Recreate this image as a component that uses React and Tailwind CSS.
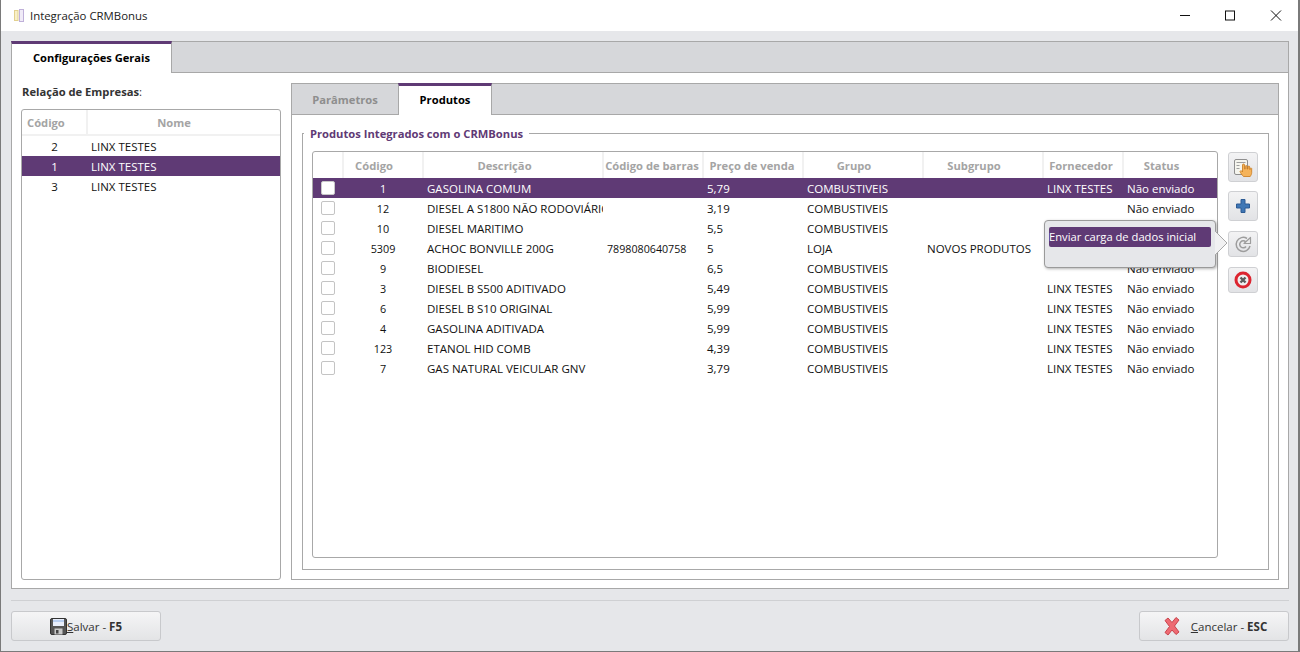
const F = { fontFamily: '"Open Sans","Noto Sans",sans-serif' };

const cols = [
  ["w-[31px]", "", ""],
  ["w-[80px]", "Código", "pr-[18px]"],
  ["w-[180px]", "Descrição", "pr-[17px]"],
  ["w-[100px]", "Código de barras", "pr-[2px]"],
  ["w-[100px]", "Preço de venda", "pr-[2px]"],
  ["w-[120px]", "Grupo", "pr-[18px]"],
  ["w-[120px]", "Subgrupo", "pr-[18px]"],
  ["w-[80px]", "Fornecedor", "pr-[4px]"],
  ["flex-1", "Status", "pr-[18px]"],
];

const rows = [
  ["1", "GASOLINA COMUM", "", "5,79", "COMBUSTIVEIS", "", "LINX TESTES", "Não enviado"],
  ["12", "DIESEL A S1800 NÃO RODOVIÁRIO", "", "3,19", "COMBUSTIVEIS", "", "", "Não enviado"],
  ["10", "DIESEL MARITIMO", "", "5,5", "COMBUSTIVEIS", "", "", ""],
  ["5309", "ACHOC BONVILLE 200G", "7898080640758", "5", "LOJA", "NOVOS PRODUTOS", "", ""],
  ["9", "BIODIESEL", "", "6,5", "COMBUSTIVEIS", "", "", "Não enviado"],
  ["3", "DIESEL B S500 ADITIVADO", "", "5,49", "COMBUSTIVEIS", "", "LINX TESTES", "Não enviado"],
  ["6", "DIESEL B S10 ORIGINAL", "", "5,99", "COMBUSTIVEIS", "", "LINX TESTES", "Não enviado"],
  ["4", "GASOLINA ADITIVADA", "", "5,99", "COMBUSTIVEIS", "", "LINX TESTES", "Não enviado"],
  ["123", "ETANOL HID COMB", "", "4,39", "COMBUSTIVEIS", "", "LINX TESTES", "Não enviado"],
  ["7", "GAS NATURAL VEICULAR GNV", "", "3,79", "COMBUSTIVEIS", "", "LINX TESTES", "Não enviado"],
];

function HeaderCell({ w, label, pad }) {
  return (
    <div className={`${w} ${pad} h-full shrink-0 border-r-2 border-[#f1f1f1] last:border-r-0 flex items-center justify-center pt-[2px] whitespace-nowrap overflow-hidden`}>
      {label}
    </div>
  );
}

function SideButton({ h, mt, children }) {
  return (
    <div className={`${h} ${mt} w-[30px] rounded-[3px] border border-[#cfd0d3] bg-gradient-to-b from-[#f3f3f4] to-[#e2e3e6] flex items-center justify-center`}>
      {children}
    </div>
  );
}

export default function App() {
  return (
    <div style={F} className="w-[1300px] h-[652px] overflow-hidden bg-[#e6e7ea] text-[11.5px] text-[#111] border-l border-r-2 border-b border-[#7a7a7a] flex flex-col">
      {/* title bar */}
      <div className="h-[31px] shrink-0 bg-white flex items-center">
        <svg width="14" height="16" viewBox="0 0 14 16" className="ml-[11px]">
          <rect x="2.500" y="2.500" width="3.500" height="10" fill="#f8efc8" stroke="#e2d08e" />
          <rect x="7.500" y="1.500" width="4" height="12" fill="#f0ebf7" stroke="#bfb0d9" />
        </svg>
        <span className="ml-[4px] pt-px text-[#222] text-[11.4px]">Integração CRMBonus</span>
        <div className="ml-auto flex items-center">
          <svg width="12" height="12" viewBox="0 0 12 12" className="mr-[33px]"><path d="M1 5.500h10" stroke="#111" strokeWidth="1" /></svg>
          <svg width="12" height="12" viewBox="0 0 12 12" className="mr-[34px]"><rect x="1.500" y="1" width="9" height="9" fill="none" stroke="#111" /></svg>
          <svg width="12" height="12" viewBox="0 0 12 12" className="mr-[16px]"><path d="M1 .5l10 10M11 .5l-10 10" stroke="#111" strokeWidth="1" /></svg>
        </div>
      </div>

      {/* main */}
      <div className="flex-1 flex flex-col pt-[10px] pl-[10px] pr-[9px]">
        {/* outer tabs */}
        <div className="h-[32px] shrink-0 flex bg-[#d6d7da] border-t border-r border-[#a8a8a8]">
          <div className="w-[161px] h-[32px] -mt-px bg-white border-t-[3px] border-[#5f3a75] border-r border-l border-l-[#a8a8a8] border-r-[#a8a8a8] flex items-center justify-center font-bold text-black text-[11.1px]">
            Configurações Gerais
          </div>
          <div className="flex-1 border-b border-[#a8a8a8]" />
        </div>

        {/* outer panel */}
        <div className="h-[516px] shrink-0 bg-white border border-t-0 border-[#a8a8a8] flex pl-[9px] pr-[9px]">
          {/* left */}
          <div className="w-[260px] shrink-0 flex flex-col">
            <div className="h-[36px] shrink-0 flex items-center pl-px pt-[2px] text-[#333]">
              <span className="font-bold text-[11.2px]">Relação de Empresas</span>:
            </div>
            <div className="h-[471px] shrink-0 border border-[#a8a8a8] rounded-[3px]">
              <div className="h-[26px] flex items-center border-b-2 border-[#f1f1f1] font-bold text-[#a4a4a4] text-[11.2px]">
                <div className="w-[66px] h-full border-r-2 border-[#f1f1f1] flex items-center pl-[5px] pt-[2px]">Código</div>
                <div className="flex-1 text-center pr-[20px] pt-[2px]">Nome</div>
              </div>
              {[["2", false], ["1", true], ["3", false]].map(([c, sel]) => (
                <div key={c} className={`h-[20px] flex items-center pt-[2px] ${sel ? "bg-[#5f3a75] text-white" : ""}`}>
                  <div className="w-[65px] text-center">{c}</div>
                  <div className="pl-[4px]">LINX TESTES</div>
                </div>
              ))}
            </div>
          </div>

          {/* right */}
          <div className="ml-[10px] w-[988px] shrink-0 mt-[10px] h-[497px] flex flex-col border border-[#a8a8a8] bg-white">
            <div className="h-[31px] shrink-0 flex bg-[#d6d7da]">
              <div className="w-[106px] h-full border-b border-[#a8a8a8] flex items-center justify-center pt-[2px] font-bold text-[#8e8e8e] text-[11.2px]">Parâmetros</div>
              <div className="w-[94px] h-[32px] -mt-px bg-white border-t-[3px] border-[#5f3a75] border-r border-r-[#a8a8a8] border-l border-l-[#a8a8a8] flex items-center justify-center font-bold text-black text-[11.2px]">Produtos</div>
              <div className="flex-1 border-b border-[#a8a8a8]" />
            </div>

            {/* fieldset */}
            <fieldset className="ml-[10px] mr-[9px] mt-[10px] h-[445px] border border-[#a8a8a8] pl-[9px] pr-[10px] pb-[11px] min-w-0">
              <legend className="-ml-[8px] px-[6px] font-bold text-[#5f3a75] text-[11.2px] leading-[17px]">Produtos Integrados com o CRMBonus</legend>
              <div className="flex h-[407px] mt-[9px] relative">
                {/* table */}
                <div className="w-[906px] shrink-0 h-full border border-[#a8a8a8] rounded-[3px] overflow-hidden">
                  <div className="h-[26px] flex font-bold text-[#a4a4a4] text-[11.2px]">
                    {cols.map(([w, label, pad], i) => (
                      <HeaderCell key={i} w={w} label={label} pad={pad} />
                    ))}
                  </div>
                  {rows.map((r, i) => {
                    const sel = i === 0;
                    return (
                      <div key={i} className={`h-[20px] flex items-center ${sel ? "bg-[#5f3a75] text-white" : ""}`}>
                        <div className="w-[30px] shrink-0 flex justify-center pr-[1px]">
                          <div className={`w-[14px] h-[14px] rounded-[2px] border ${sel ? "bg-white border-[#c8c8c8]" : "bg-white border-[#c4c4c4]"}`} />
                        </div>
                        <div className="w-[80px] shrink-0 text-center text-[10.8px] pt-[2px]">{r[0]}</div>
                        <div className="w-[180px] shrink-0 pl-[4px] whitespace-nowrap overflow-hidden pt-[2px]">{r[1]}</div>
                        <div className="w-[100px] shrink-0 pl-[4px] text-[10.7px] pt-[2px]">{r[2]}</div>
                        <div className="w-[100px] shrink-0 pl-[4px] pt-[2px]">{r[3]}</div>
                        <div className="w-[120px] shrink-0 pl-[4px] pt-[2px]">{r[4]}</div>
                        <div className="w-[120px] shrink-0 pl-[4px] whitespace-nowrap pt-[2px]">{r[5]}</div>
                        <div className="w-[80px] shrink-0 pl-[4px] whitespace-nowrap pt-[2px]">{r[6]}</div>
                        <div className="flex-1 pl-[4px] whitespace-nowrap pt-[2px]">{r[7]}</div>
                      </div>
                    );
                  })}
                </div>

                {/* side buttons */}
                <div className="ml-[10px] flex flex-col">
                  <SideButton h="h-[30px]" mt="mt-px">
                    <svg width="22" height="22" viewBox="0 0 22 22">
                      <rect x="2.500" y="3.500" width="13" height="15" rx="1.500" fill="#f5f5ee" stroke="#8f8f8f" />
                      <path d="M4.500 6.500h9M4.500 9.500h3M4.500 12.500h3" stroke="#9f9f9f" />
                      <path d="M11.500 20.500c-1.500-1.500-3-3.500-3.500-5l1-1 1.500 1.500V9a1 1 0 012 0v4h.8v-2.500a.9.9 0 011.800 0V13h.8v-2a.9.9 0 011.800 0v2.500h.5v-1a.8.8 0 011.500 0v4c0 1.500-.8 3-1.500 4z" fill="#f5b35a" stroke="#c97a1a" strokeWidth=".8" />
                    </svg>
                  </SideButton>
                  <SideButton h="h-[30px]" mt="mt-[9px]">
                    <svg width="18" height="18" viewBox="0 0 18 18">
                      <path d="M7 2.500h4v4.500h4.500v4H11v4.500H7V11H2.500V7H7z" fill="#3f77b5" stroke="#2c5b94" strokeWidth="1" strokeLinejoin="round" />
                    </svg>
                  </SideButton>
                  <SideButton h="h-[26px]" mt="mt-[10px]">
                    <svg width="20" height="20" viewBox="0 0 20 20">
                      <path d="M17 12a7 7 0 11-3-7.500" fill="none" stroke="#9d9d9d" strokeWidth="1.500" />
                      <path d="M13 12.500a3.500 3.500 0 11-.2-4.500" fill="none" stroke="#9d9d9d" strokeWidth="1.500" />
                      <path d="M17.500 3.500v6h-6.500z" fill="#ececec" stroke="#9d9d9d" strokeWidth="1.200" strokeLinejoin="round" />
                    </svg>
                  </SideButton>
                  <SideButton h="h-[26px]" mt="mt-[10px]">
                    <svg width="20" height="20" viewBox="0 0 20 20">
                      <circle cx="10" cy="10" r="7" fill="#f0f0f0" stroke="#dc2530" strokeWidth="3" />
                      <path d="M7.500 7.500l5 5M12.500 7.500l-5 5" stroke="#5c5c5c" strokeWidth="2.400" />
                    </svg>
                  </SideButton>
                </div>

                {/* popover */}
                <div className="absolute left-[732px] top-[69px] w-[172px] h-[48px] rounded-[4px] bg-[#e6e7ea] border border-[#9a9a9a] shadow-[1px_1px_3px_rgba(0,0,0,0.3)] pt-[6px] px-[4px]">
                  <div className="h-[20px] rounded-[2px] bg-[#5f3a75] text-white flex items-center text-[11.2px] whitespace-nowrap">Enviar carga de dados inicial</div>
                </div>
                <svg width="14" height="26" viewBox="0 0 14 26" className="absolute left-[903px] top-[79px]">
                  <path d="M0 1l12 12L0 25z" fill="#f1f1f2" />
                  <path d="M0 1l12 12L0 25" fill="none" stroke="#a8a8a8" />
                </svg>
              </div>
            </fieldset>
          </div>
        </div>

        {/* footer */}
        <div className="mt-[11px] border-t border-[#cfd0d3] pt-[10px] flex justify-between">
          <div className="w-[150px] h-[30px] rounded-[3px] border border-[#c8c9cc] bg-gradient-to-b from-[#f5f5f6] to-[#e3e4e6] flex items-center justify-center text-[#333]">
            <svg width="17" height="17" viewBox="0 0 17 17">
              <rect x=".5" y=".5" width="16" height="16" rx="1.500" fill="#555" stroke="#333" />
              <rect x="3" y="1" width="11" height="7" fill="#e8eefb" />
              <path d="M3 3h11" stroke="#8ab0e8" />
              <rect x="4.500" y="10.500" width="8" height="6" fill="#c9c9c9" />
              <rect x="6" y="12" width="2.500" height="3.500" fill="#444" />
            </svg>
            <span className="pt-[2px]"><span className="underline">S</span>alvar - <b>F5</b></span>
          </div>
          <div className="w-[150px] h-[30px] rounded-[3px] border border-[#c8c9cc] bg-gradient-to-b from-[#f5f5f6] to-[#e3e4e6] flex items-center justify-center text-[#333]">
            <svg width="18" height="20" viewBox="0 0 18 20" className="mr-[10px] ml-[2px]">
              <path d="M2 4.500L5 2l4 4.500L13 1.500l3 2.500-4.500 6 4.500 6-3 2.500-4-4.500-4 5-3-2.500 4.500-6z" fill="#ee6a72" stroke="#c9434c" strokeWidth="1" strokeLinejoin="round" />
            </svg>
            <span className="pt-[2px]"><span className="underline">C</span>ancelar - <b>ESC</b></span>
          </div>
        </div>
      </div>
    </div>
  );
}
